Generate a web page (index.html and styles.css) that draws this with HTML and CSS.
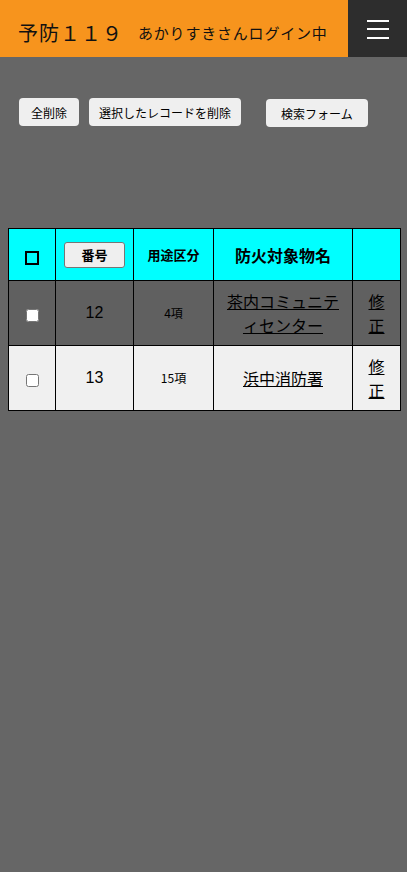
FILE: index.html
```html
<!DOCTYPE html>
<html lang="ja">
<head>
<meta charset="utf-8">
<link rel="stylesheet" href="styles.css">
</head>
<body>
<header class="topbar">
  <div class="brand">
    <span class="title">予防１１９</span>
    <span class="user">あかりすきさんログイン中</span>
  </div>
  <div class="menu">
    <svg width="24" height="22" viewBox="0 0 24 22"><rect x="1" y="2" width="22" height="2" fill="#fff"/><rect x="1" y="10" width="22" height="2" fill="#fff"/><rect x="1" y="19" width="22" height="2" fill="#fff"/></svg>
  </div>
</header>
<div class="actions">
  <button class="btn">全削除</button>
  <button class="btn narrow">選択したレコードを削除</button>
  <button class="btn search">検索フォーム</button>
</div>
<table class="list">
  <colgroup>
    <col class="c1"><col class="c2"><col class="c3"><col class="c4"><col class="c5">
  </colgroup>
  <thead>
    <tr class="head">
      <th><span class="box"></span></th>
      <th><button class="sortbtn">番号</button></th>
      <th class="small">用途区分</th>
      <th>防火対象物名</th>
      <th></th>
    </tr>
  </thead>
  <tbody>
    <tr class="dark">
      <td><input type="checkbox" class="chk"></td>
      <td class="num">12</td>
      <td class="kou">4項</td>
      <td class="name"><a href="#">茶内コミュニティセンター</a></td>
      <td class="edit"><a href="#">修正</a></td>
    </tr>
    <tr class="light">
      <td><input type="checkbox" class="chk"></td>
      <td class="num">13</td>
      <td class="kou">15項</td>
      <td class="name"><a href="#">浜中消防署</a></td>
      <td class="edit"><a href="#">修正</a></td>
    </tr>
  </tbody>
</table>
</body>
</html>
```
FILE: styles.css
```css
html, body {
  margin: 0;
  padding: 0;
}
body {
  background: #666666;
  font-family: "Liberation Sans", "Noto Sans CJK JP", sans-serif;
  min-height: 872px;
}
.topbar {
  display: flex;
  height: 57px;
}
.brand {
  flex: 1;
  background: #f7941d;
  display: flex;
  align-items: center;
  padding-left: 18px;
  padding-top: 8px;
  box-sizing: border-box;
}
.title {
  font-size: 20px;
  color: #111;
  letter-spacing: 1px;
  font-family: "Noto Sans CJK JP", sans-serif;
}
.user {
  font-size: 15px;
  color: #111;
  margin-left: 15px;
  letter-spacing: 0.8px;
  font-family: "Noto Sans CJK JP", sans-serif;
}
.menu {
  width: 59px;
  background: #2d2d2d;
  display: flex;
  align-items: center;
  justify-content: center;
}
.actions {
  display: flex;
  align-items: flex-start;
  padding: 41px 0 0 19px;
  height: 130px;
  box-sizing: border-box;
  margin-bottom: 41px;
}
.btn {
  font-family: "Noto Sans CJK JP", sans-serif;
  font-size: 12px;
  background: #efefef;
  border: none;
  border-radius: 4px;
  height: 28px;
  padding: 0 12px;
  margin-right: 10px;
  color: #000;
}
.btn.narrow {
  padding: 0 10px;
}
.btn.search {
  margin-left: 15px;
  margin-top: 1px;
  padding: 0 15px;
}
.list {
  margin-left: 8px;
  border-collapse: collapse;
  table-layout: fixed;
  width: 392px;
  font-family: "Noto Sans CJK JP", sans-serif;
}
.c1 { width: 47px; }
.c2 { width: 78px; }
.c3 { width: 80px; }
.c4 { width: 139px; }
.c5 { width: 48px; }
.list th, .list td {
  border: 1px solid #000;
  text-align: center;
  padding: 0 4px;
  color: #000;
}
.head {
  background: #00ffff;
  height: 52px;
}
.head th {
  font-size: 16px;
  font-weight: bold;
}
.head th.small {
  font-size: 13px;
}
.box {
  display: inline-block;
  width: 10px;
  height: 10px;
  border: 2px solid #000;
  vertical-align: middle;
  margin-top: 2px;
}
.sortbtn {
  font-family: "Noto Sans CJK JP", sans-serif;
  font-size: 13px;
  font-weight: bold;
  width: 61px;
  height: 26px;
  background: #efefef;
  border: 1px solid #767676;
  border-radius: 3px;
  padding: 0;
  color: #000;
}
.dark { background: #606060; }
.light { background: #f0f0f0; }
.list td {
  font-size: 16px;
  line-height: 24px;
  padding: 8px 4px;
}
.list td.num {
  font-family: "Liberation Sans", sans-serif;
}
.list td.kou {
  font-size: 12px;
}
.list td.name {
  padding: 8px 9px;
}
.list td.edit {
  padding: 8px 8px;
}
.list a {
  color: #000;
  text-decoration: underline;
}
.chk {
  width: 13px;
  height: 13px;
  margin: 0;
  vertical-align: middle;
}
```
